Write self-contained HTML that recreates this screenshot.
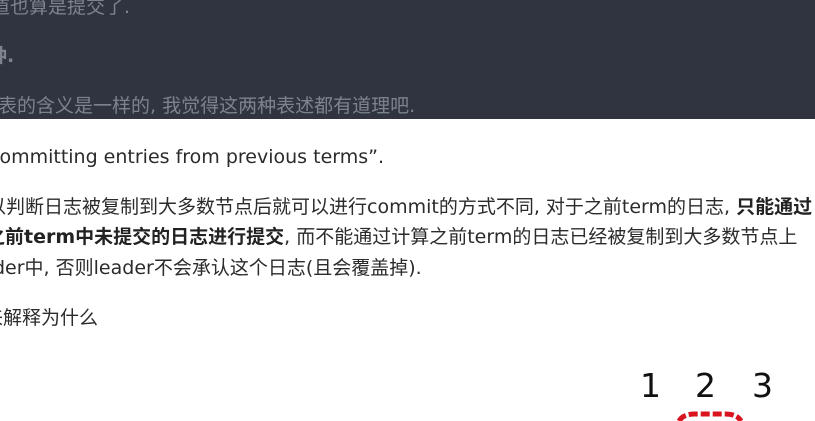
<!DOCTYPE html>
<html><head><meta charset="utf-8"><style>
html,body{margin:0;padding:0;width:815px;height:421px;overflow:hidden;background:#fff;position:relative}
.dark{position:absolute;left:0;top:0;width:815px;height:119px;background:#2f3440}
.t{position:absolute;white-space:nowrap;font-family:"DejaVu Sans","Noto Sans CJK SC",sans-serif;font-size:19px;line-height:24px}
.g{color:#7c828e}
.b{color:#2b2b2b}
b{font-weight:bold;color:#222}
.n{position:absolute;font-family:"DejaVu Sans",sans-serif;font-size:33px;color:#111;top:366px}
</style></head><body>
<div class="dark"></div>
<div class="t g" style="left:-9px;top:-5px">道也算是提交了.</div>
<div class="t g" style="left:-12px;top:44px;font-weight:bold">种.</div>
<div class="t g" style="left:-2px;top:94px">表的含义是一样的, 我觉得这两种表述都有道理吧.</div>
<div class="t b" style="left:-11px;top:145px">committing entries from previous terms”.</div>
<div class="t b" style="left:-13px;top:195px">以判断日志被复制到大多数节点后就可以进行commit的方式不同, 对于之前term的日志, <b>只能通过</b></div>
<div class="t b" style="left:-14px;top:225px"><b>之前term中未提交的日志进行提交</b>, 而不能通过计算之前term的日志已经被复制到大多数节点上</div>
<div class="t b" style="left:-7px;top:256px">der中, 否则leader不会承认这个日志(且会覆盖掉).</div>
<div class="t b" style="left:-16px;top:306px">来解释为什么</div>
<div class="n" style="left:640px">1</div>
<div class="n" style="left:695px">2</div>
<div class="n" style="left:752px">3</div>
<svg style="position:absolute;left:675px;top:410px" width="70" height="11"><path d="M4 11 Q8 4 20 4 L50 4 Q62 4 66 11" stroke="#d9141e" stroke-width="5" fill="none" stroke-dasharray="9 3"/></svg>
</body></html>
